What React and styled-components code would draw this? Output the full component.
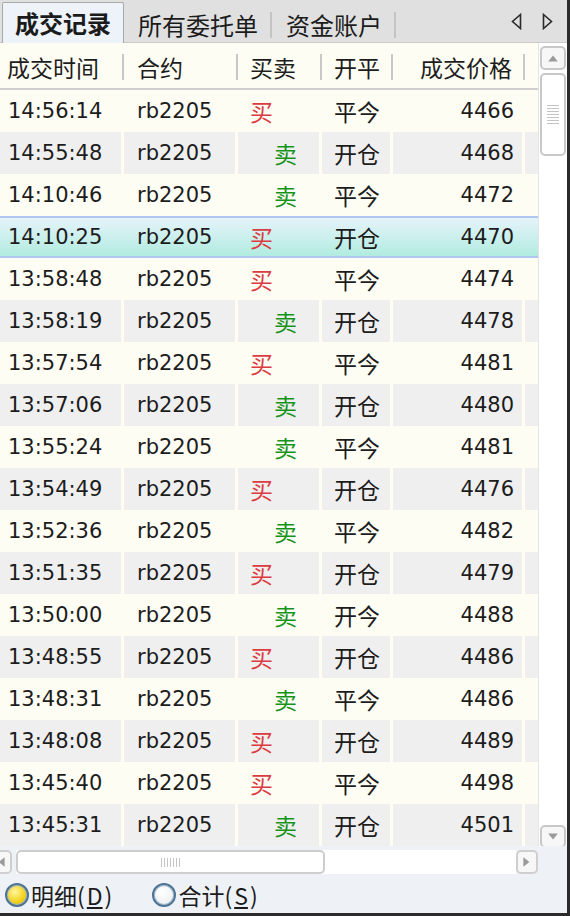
import styled, { createGlobalStyle, css } from 'styled-components'

const GlobalStyle = createGlobalStyle`
  html, body { margin: 0; padding: 0; background: #ffffff; }
  * { box-sizing: border-box; }
`

const CJK = `"Noto Sans CJK SC", "Noto Sans", sans-serif`
const NUM = `"DejaVu Sans", "Noto Sans CJK SC", sans-serif`

// 列宽：成交时间 / 合约 / 买卖 / 开平 / 成交价格 / 空白
const COLS = '121px 111px 81px 68px 129px 1fr'

const Frame = styled.div`
  width: 570px;
  height: 916px;
  display: flex;
  flex-direction: column;
  background: #eef1f5;
  border-right: 3px solid #2b2b2b;
  border-bottom: 3px solid #2b2b2b;
  overflow: hidden;
`

const TabBar = styled.div`
  height: 43px;
  flex: none;
  display: flex;
  align-items: flex-end;
  background: #e0e0e0;
  border-bottom: 1px solid #c9c9c9;
  padding-left: 2px;
`

const Tab = styled.div`
  height: 36px;
  display: flex;
  align-items: center;
  justify-content: center;
  font-family: ${CJK};
  font-size: 24px;
  color: #1b1b1b;
  position: relative;
  ${(p) =>
    p.active
      ? css`
          width: 122px;
          height: 41px;
          font-weight: 700;
          background: #eef3fa;
          border: 1px solid #a9a9a9;
          border-bottom: none;
          border-radius: 2px 2px 0 0;
          margin-bottom: -1px;
          padding-bottom: 2px;
        `
      : css`
          padding: 0 14px 0 14px;
          &::after {
            content: '';
            position: absolute;
            right: 0;
            top: 6px;
            bottom: 4px;
            width: 2px;
            background: #c4c4c4;
          }
        `}
`

const TabArrows = styled.div`
  margin-left: auto;
  height: 40px;
  display: flex;
  align-items: center;
  gap: 20px;
  padding-right: 14px;
  padding-bottom: 2px;
`

const Body = styled.div`
  flex: none;
  display: flex;
  height: 803px;
  background: #fdfdf4;
`

const Grid = styled.div`
  width: 538px;
  flex: none;
  display: flex;
  flex-direction: column;
`

const HeaderRow = styled.div`
  height: 47px;
  display: grid;
  grid-template-columns: ${COLS};
  column-gap: 3px;
  align-items: center;
  background: #fdfdf4;
  border-bottom: 2px solid #cfcfcf;
  padding-top: 3px;
`

const HeadCell = styled.div`
  position: relative;
  font-family: ${CJK};
  font-size: 23px;
  color: #1d1d1d;
  padding-left: ${(p) => p.pl || 12}px;
  text-align: ${(p) => (p.right ? 'right' : 'left')};
  padding-right: ${(p) => (p.right ? 10 : 0)}px;
  line-height: 30px;
  ${(p) =>
    p.divider &&
    css`
      &::after {
        content: '';
        position: absolute;
        right: -3px;
        top: 2px;
        height: 26px;
        width: 2px;
        background: #c9c9c9;
      }
    `}
`

const Row = styled.div`
  height: 42px;
  flex: none;
  display: grid;
  grid-template-columns: ${COLS};
  column-gap: 3px;
  background: #fdfdf4;
  ${(p) =>
    p.selected &&
    css`
      background: linear-gradient(#e6f3fb, #b1ecdf);
      border-top: 2px solid #b1c7f0;
      border-bottom: 2px solid #b1c7f0;
    `}
`

const Cell = styled.div`
  display: flex;
  align-items: center;
  background: ${(p) => (p.shade ? '#efefef' : 'transparent')};
  padding-left: ${(p) => p.pl || 0}px;
  padding-right: ${(p) => p.pr || 0}px;
  justify-content: ${(p) => (p.right ? 'flex-end' : 'flex-start')};
  font-family: ${(p) => (p.cjk ? CJK : NUM)};
  font-size: ${(p) => (p.cjk ? '23px' : '21px')};
  color: ${(p) => p.color || '#1c1c1c'};
  white-space: nowrap;
`

const VScroll = styled.div`
  flex: 1;
  display: flex;
  flex-direction: column;
  align-items: center;
  padding: 3px 0 0;
  background: #ffffff;
  border-left: 1px solid #e4e4e4;
`

const ScrollBtn = styled.div`
  width: 26px;
  height: ${(p) => p.h || 24}px;
  border: 2px solid #c8c8c8;
  border-radius: 5px;
  background: #f7f7f7;
  display: flex;
  align-items: center;
  justify-content: center;
  flex: none;
  margin-bottom: ${(p) => p.mb || 0}px;
`

const VThumb = styled.div`
  margin-top: 3px;
  width: 26px;
  height: 83px;
  border: 2px solid #c8c8c8;
  border-radius: 5px;
  background: #ffffff;
  display: flex;
  flex-direction: column;
  align-items: center;
  justify-content: center;
  gap: 2px;
  flex: none;
  span {
    width: 12px;
    height: 1px;
    background: #c4c4c4;
  }
`

const Spacer = styled.div`
  flex: 1;
`

const HScroll = styled.div`
  height: 30px;
  flex: none;
  display: flex;
  align-items: center;
  background: #eef1f5;
  padding-right: 29px;
  padding-top: 2px;
`

const HBtn = styled.div`
  width: 22px;
  height: 24px;
  border: 2px solid #cfcfcf;
  border-radius: 5px;
  background: #f7f7f7;
  display: flex;
  align-items: center;
  justify-content: center;
  flex: none;
  margin-left: ${(p) => p.ml || 0}px;
`

const HTrack = styled.div`
  flex: 1;
  height: 24px;
  margin: 0 0 0 4px;
  background: #ffffff;
  display: flex;
`

const HThumb = styled.div`
  width: 309px;
  height: 24px;
  border: 2px solid #cdcdcd;
  border-radius: 5px;
  background: #ffffff;
  display: flex;
  align-items: center;
  justify-content: center;
  gap: 2px;
  span {
    width: 1px;
    height: 9px;
    background: #c4c4c4;
  }
`

const RadioBar = styled.div`
  flex: 1;
  display: flex;
  align-items: center;
  background: #eef1f5;
`

const RadioItem = styled.label`
  display: flex;
  align-items: center;
  gap: 2px;
  margin-left: ${(p) => p.ml || 0}px;
  font-family: ${CJK};
  font-size: 23px;
  color: #1b1b1b;
  u { text-decoration: underline; text-underline-offset: 2px; }
`

const RadioDot = styled.span`
  width: 24px;
  height: 24px;
  border-radius: 50%;
  border: 2px solid #4d7494;
  box-shadow: inset 0 0 0 1px #9fbad0;
  background: ${(p) =>
    p.checked
      ? 'radial-gradient(circle at 40% 35%, #fff6a0 0%, #f3d21a 55%, #d9a90a 100%)'
      : 'radial-gradient(circle at 40% 35%, #ffffff 0%, #eef0f2 70%, #d9dde2 100%)'};
  flex: none;
`

const trades = [
  ['14:56:14', '买', '平今', 4466],
  ['14:55:48', '卖', '开仓', 4468],
  ['14:10:46', '卖', '平今', 4472],
  ['14:10:25', '买', '开仓', 4470],
  ['13:58:48', '买', '平今', 4474],
  ['13:58:19', '卖', '开仓', 4478],
  ['13:57:54', '买', '平今', 4481],
  ['13:57:06', '卖', '开仓', 4480],
  ['13:55:24', '卖', '平今', 4481],
  ['13:54:49', '买', '开仓', 4476],
  ['13:52:36', '卖', '平今', 4482],
  ['13:51:35', '买', '开仓', 4479],
  ['13:50:00', '卖', '开今', 4488],
  ['13:48:55', '买', '开仓', 4486],
  ['13:48:31', '卖', '平今', 4486],
  ['13:48:08', '买', '开仓', 4489],
  ['13:45:40', '买', '平今', 4498],
  ['13:45:31', '卖', '开仓', 4501],
]

const Tri = ({ dir, fill, size = 10 }) => {
  const pts = {
    up: '1,8 5,3 9,8',
    down: '1,2 5,7 9,2',
    left: '8,1 3,5 8,9',
    right: '2,1 7,5 2,9',
  }[dir]
  return (
    <svg width={size} height={size} viewBox="0 0 10 10">
      <polygon points={pts} fill={fill} />
    </svg>
  )
}

const OutlineArrow = ({ left }) => (
  <svg width="11" height="17" viewBox="0 0 11 17">
    <polygon
      points={left ? '9.5,1.5 1.5,8.5 9.5,15.5' : '1.5,1.5 9.5,8.5 1.5,15.5'}
      fill="none"
      stroke="#2a2a2a"
      strokeWidth="1.6"
    />
  </svg>
)

function App() {
  return (
    <Frame>
      <GlobalStyle />
      <TabBar>
        <Tab active>成交记录</Tab>
        <Tab>所有委托单</Tab>
        <Tab>资金账户</Tab>
        <TabArrows>
          <OutlineArrow left />
          <OutlineArrow />
        </TabArrows>
      </TabBar>

      <Body>
        <Grid>
          <HeaderRow>
            <HeadCell pl={7} divider>成交时间</HeadCell>
            <HeadCell pl={13} divider>合约</HeadCell>
            <HeadCell pl={12} divider>买卖</HeadCell>
            <HeadCell pl={12} divider>开平</HeadCell>
            <HeadCell right divider>成交价格</HeadCell>
            <HeadCell />
          </HeaderRow>
          {trades.map(([time, side, kp, price], i) => {
            const selected = i === 3
            const shade = i % 2 === 1 && !selected
            const buy = side === '买'
            return (
              <Row key={time + i} selected={selected}>
                <Cell shade={shade} pl={8}>{time}</Cell>
                <Cell shade={shade} pl={13}>rb2205</Cell>
                <Cell shade={shade} cjk pl={buy ? 12 : 36} color={buy ? '#dc3b41' : '#17931c'}>
                  {side}
                </Cell>
                <Cell shade={shade} cjk pl={12}>{kp}</Cell>
                <Cell shade={shade} right pr={8}>{price}</Cell>
                <Cell shade={shade} />
              </Row>
            )
          })}
        </Grid>
        <VScroll>
          <ScrollBtn>
            <Tri dir="up" fill="#9a9a9a" size={12} />
          </ScrollBtn>
          <VThumb>
            {Array.from({ length: 7 }).map((_, k) => (
              <span key={k} />
            ))}
          </VThumb>
          <Spacer />
          <ScrollBtn h={23} mb={-2}>
            <Tri dir="down" fill="#9a9a9a" size={12} />
          </ScrollBtn>
        </VScroll>
      </Body>

      <HScroll>
        <HBtn ml={-10}>
          <Tri dir="left" fill="#9a9a9a" size={12} />
        </HBtn>
        <HTrack>
          <HThumb>
            {Array.from({ length: 7 }).map((_, k) => (
              <span key={k} />
            ))}
          </HThumb>
        </HTrack>
        <HBtn>
          <Tri dir="right" fill="#9a9a9a" size={12} />
        </HBtn>
      </HScroll>

      <RadioBar>
        <RadioItem ml={5}>
          <RadioDot checked />
          明细(<u>D</u>)
        </RadioItem>
        <RadioItem ml={40}>
          <RadioDot />
          合计(<u>S</u>)
        </RadioItem>
      </RadioBar>
    </Frame>
  )
}

export default App
